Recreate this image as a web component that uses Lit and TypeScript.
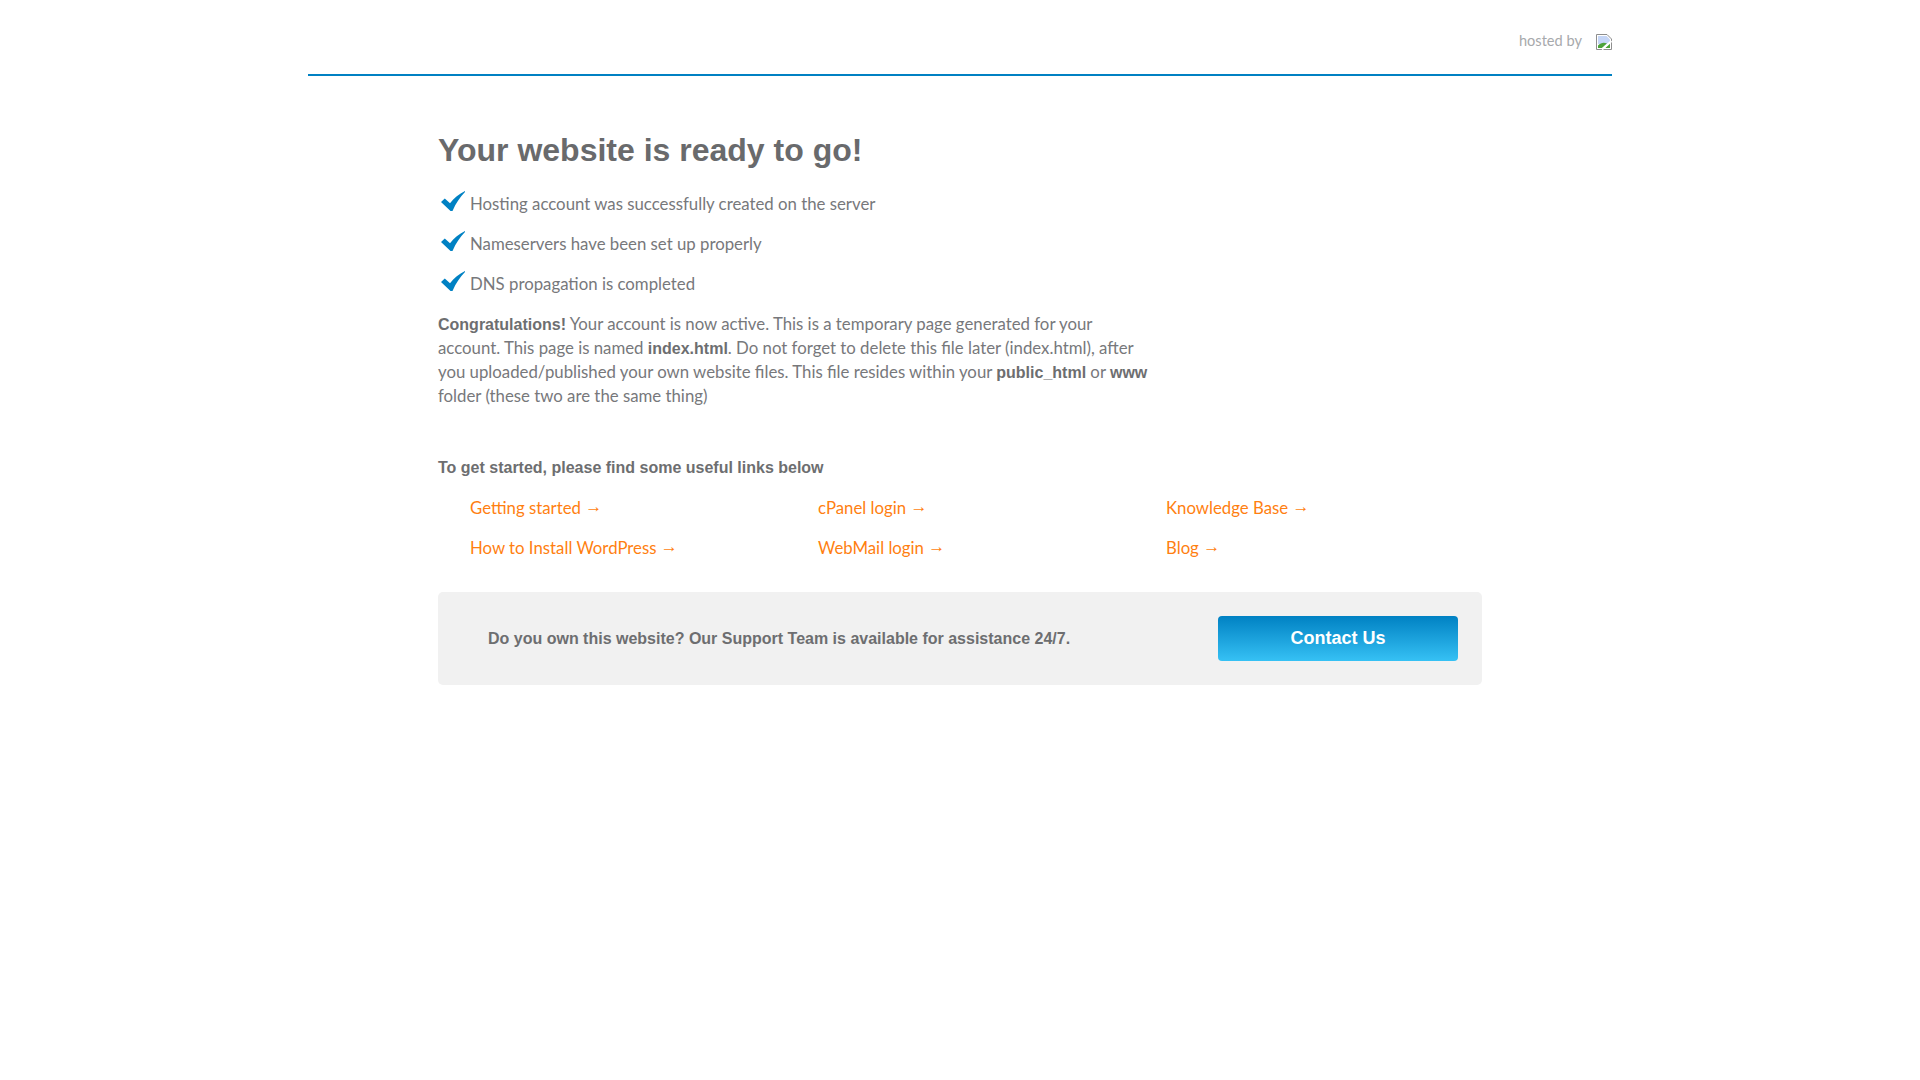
import { LitElement, html, css } from 'lit';
import { customElement } from 'lit/decorators.js';

const CHECKS = [
  'Hosting account was successfully created on the server',
  'Nameservers have been set up properly',
  'DNS propagation is completed',
];

const LINKS = [
  'Getting started',
  'cPanel login',
  'Knowledge Base',
  'How to Install WordPress',
  'WebMail login',
  'Blog',
];

@customElement('app-root')
export class AppRoot extends LitElement {
  static styles = css`
    :host {
      display: block;
      background: #fff;
      min-height: 1080px;
      font-family: 'Lato', 'Liberation Sans', sans-serif;
      font-size: 16.8px;
      font-weight: 400;
      color: #77787b;
    }
    .header {
      width: 1304px;
      height: 76px;
      margin-left: 308px;
      border-bottom: 2px solid #0081c3;
      display: flex;
      justify-content: flex-end;
      align-items: flex-start;
      padding-top: 32px;
      box-sizing: border-box;
    }
    .hosted {
      font-size: 14.6px;
      line-height: 17px;
      color: #a7a9ac;
      margin-right: 14px;
    }
    .broken {
      display: block;
      margin-top: 2px;
    }
    .main {
      width: 1044px;
      margin-left: 438px;
    }
    h1 {
      font-family: 'Liberation Sans', Arial, sans-serif;
      font-size: 32px;
      line-height: 40px;
      font-weight: 700;
      color: #696a6c;
      margin: 54px 0 0;
    }
    .checks {
      margin: 13px 0 0;
      padding: 0;
      list-style: none;
    }
    .checks li {
      display: flex;
      align-items: center;
      height: 40px;
    }
    .checks svg {
      width: 24px;
      height: 20px;
      margin: -5px 5px 0 3px;
      flex: none;
    }
    .intro {
      width: 716px;
      margin: 9px 0 0;
      line-height: 24px;
    }
    b {
      font-family: 'Liberation Sans', Arial, sans-serif;
      font-size: 16px;
      font-weight: 700;
      line-height: 1;
      color: #6d6e70;
    }
    .lead {
      font-family: 'Liberation Sans', Arial, sans-serif;
      font-weight: 700;
      font-size: 16px;
      line-height: 20px;
      color: #6d6e70;
      margin: 50px 0 0;
    }
    .links {
      display: grid;
      grid-template-columns: repeat(3, 348px);
      grid-auto-rows: 40px;
      margin: 9px 0 0;
      padding: 0 0 0 32px;
      list-style: none;
      align-items: center;
    }
    .links a {
      color: #ff7f11;
      text-decoration: none;
    }
    .arrow {
      font-family: 'Liberation Sans', Arial, sans-serif;
      font-size: 17px;
      line-height: 1;
      vertical-align: 2px;
    }
    .support {
      display: flex;
      align-items: center;
      justify-content: space-between;
      height: 93px;
      margin-top: 25px;
      padding: 0 24px 0 50px;
      box-sizing: border-box;
      background: #f1f1f1;
      border-radius: 5px;
    }
    .support p {
      font-family: 'Liberation Sans', Arial, sans-serif;
      font-weight: 700;
      font-size: 16px;
      color: #6d6e70;
      margin: 0;
    }
    .contact {
      display: flex;
      align-items: center;
      justify-content: center;
      width: 240px;
      height: 45px;
      border-radius: 4px;
      background: linear-gradient(#0081c3, #36c1f4);
      color: #fff;
      font-family: 'Liberation Sans', Arial, sans-serif;
      font-weight: 700;
      font-size: 18px;
      text-decoration: none;
    }
  `;

  render() {
    return html`
      <div class="header">
        <span class="hosted">hosted by</span>
        <svg class="broken" width="16" height="16" viewBox="0 0 16 16">
          <path d="M.5.5H11L15.5 5V15.5H.5Z" fill="#fff" stroke="#8e8e8e"/>
          <path d="M2 2H10.5L14 5.5V11L2 10Z" fill="#c5d6f7"/>
          <path d="M2 14V11.5C5 8.5 8 8 11 9.5L6 14Z" fill="#4da33a"/>
          <path d="M9 14L14 9V14Z" fill="#4da33a"/>
          <path d="M6 15.5L15.5 7" stroke="#fff" stroke-width="2"/>
        </svg>
      </div>
      <div class="main">
        <h1>Your website is ready to go!</h1>
        <ul class="checks">
          ${CHECKS.map(
            (c) => html`<li>
              <svg viewBox="0 0 24 20">
                <path d="M0 11L3.8 7.5L9 12.2C13 7.2 18 3 24 0V1C19 6 15 12 11.5 20H9.5Z" fill="#0081c3"/>
              </svg>
              <span>${c}</span>
            </li>`
          )}
        </ul>
        <p class="intro">
          <b>Congratulations!</b> Your account is now active. This is a temporary page generated for your
          account. This page is named <b>index.html</b>. Do not forget to delete this file later (index.html), after
          you uploaded/published your own website files. This file resides within your <b>public_html</b> or <b>www</b>
          folder (these two are the same thing)
        </p>
        <p class="lead">To get started, please find some useful links below</p>
        <ul class="links">
          ${LINKS.map((l) => html`<li><a href="#">${l} <span class="arrow">→</span></a></li>`)}
        </ul>
        <div class="support">
          <p>Do you own this website? Our Support Team is available for assistance 24/7.</p>
          <a class="contact" href="#">Contact Us</a>
        </div>
      </div>
    `;
  }
}
